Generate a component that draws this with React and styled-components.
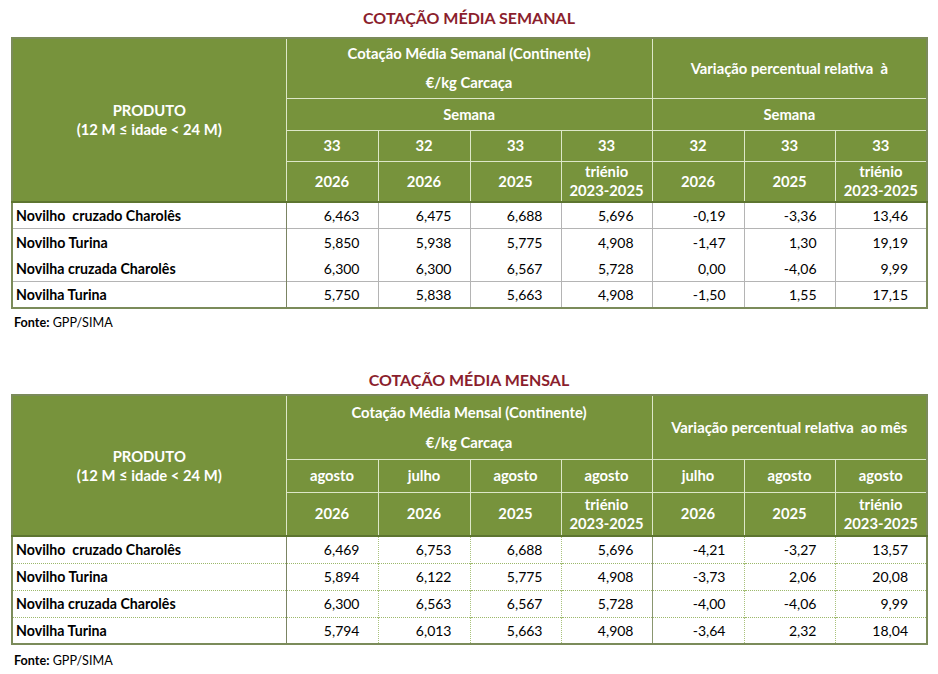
import React from "react";
import styled, { createGlobalStyle } from "styled-components";

const Global = createGlobalStyle`
  html, body { margin: 0; padding: 0; background: #fff; }
  body { font-family: Lato, "Liberation Sans", sans-serif; color: #000; }
`;

const Page = styled.div`
  width: 938px;
  display: flex;
  flex-direction: column;
`;

const Title = styled.div`
  text-align: center;
  color: #8b1e2d;
  font-weight: 700;
  font-size: 16px;
  line-height: 20px;
  margin-top: ${(p) => p.$top}px;
  margin-bottom: ${(p) => p.$bottom}px;
`;

const Table = styled.table`
  margin-left: 11px;
  width: 915px;
  border-collapse: collapse;
  table-layout: fixed;
  border: 2px solid #7b8b5a;
`;

const Col = styled.col`
  width: ${(p) => p.$w}px;
`;

const HeadRow = styled.tr`
  height: ${(p) => p.$h}px;
`;

const Th = styled.th`
  background: #77933c;
  color: #fff;
  font-weight: 700;
  font-size: 14.8px;
  line-height: ${(p) => p.$lh || 19}px;
  text-align: center;
  vertical-align: middle;
  padding: 0;
  border: 1px solid #dde7c8;
  white-space: pre;
  ${(p) => p.$last && "border-bottom: 2px solid #5d7530;"}
`;

const DataRow = styled.tr`
  height: ${(p) => p.$h}px;
`;

const NameCell = styled.td`
  font-weight: 700;
  font-size: 14.2px;
  text-align: left;
  padding: 0 0 0 3px;
  white-space: pre;
  border-right: 1px solid #7b8463;
  border-top: ${(p) =>
    p.$noTop ? "0" : p.$dotted ? "1px dotted #9cb86a" : "1px solid #b4b4b4"};
`;

const NumCell = styled.td`
  font-size: 14px;
  text-align: right;
  padding: 0 18px 0 0;
  border-top: ${(p) =>
    p.$noTop ? "0" : p.$dotted ? "1px dotted #9cb86a" : "1px solid #b4b4b4"};
  border-left: ${(p) =>
    p.$split
      ? "1px solid #8a9670"
      : p.$dotted
      ? "1px dotted #a9c27c"
      : "1px solid #b4b4b4"};
`;

const Source = styled.div`
  margin-left: 14px;
  font-size: 12.6px;
  line-height: 16px;
  margin-top: ${(p) => p.$top}px;
`;

const Bold = styled.b`
  font-weight: 700;
`;

const widths = [274, 92, 92, 91, 91, 92, 91, 92];

const Cols = () => (
  <colgroup>
    {widths.map((w, i) => (
      <Col key={i} $w={w} />
    ))}
  </colgroup>
);

const names = [
  "Novilho  cruzado Charolês",
  "Novilho Turina",
  "Novilha cruzada Charolês",
  "Novilha Turina",
];

const weekly = [
  ["6,463", "6,475", "6,688", "5,696", "-0,19", "-3,36", "13,46"],
  ["5,850", "5,938", "5,775", "4,908", "-1,47", "1,30", "19,19"],
  ["6,300", "6,300", "6,567", "5,728", "0,00", "-4,06", "9,99"],
  ["5,750", "5,838", "5,663", "4,908", "-1,50", "1,55", "17,15"],
];

const monthly = [
  ["6,469", "6,753", "6,688", "5,696", "-4,21", "-3,27", "13,57"],
  ["5,894", "6,122", "5,775", "4,908", "-3,73", "2,06", "20,08"],
  ["6,300", "6,563", "6,567", "5,728", "-4,00", "-4,06", "9,99"],
  ["5,794", "6,013", "5,663", "4,908", "-3,64", "2,32", "18,04"],
];

const yearRow = ["2026", "2026", "2025", "triénio\n2023-2025", "2026", "2025", "triénio\n2023-2025"];

const Body = ({ rows, dotted, rowH }) => (
  <tbody>
    {rows.map((r, i) => {
      const noTop = !dotted && i === 2;
      return (
        <DataRow key={i} $h={rowH}>
          <NameCell $noTop={noTop} $dotted={dotted}>
            {names[i]}
          </NameCell>
          {r.map((v, j) => (
            <NumCell key={j} $noTop={noTop} $dotted={dotted} $split={dotted && j === 4}>
              {v}
            </NumCell>
          ))}
        </DataRow>
      );
    })}
  </tbody>
);

const Produto = ({ span }) => (
  <Th rowSpan={span} $last>
    {"PRODUTO\n(12 M ≤ idade < 24 M)"}
  </Th>
);

export default function App() {
  return (
    <Page>
      <Global />
      <Title $top={8} $bottom={9}>COTAÇÃO MÉDIA SEMANAL</Title>
      <Table>
        <Cols />
        <thead>
          <HeadRow $h={60}>
            <Produto span={4} />
            <Th colSpan={4} $lh={29}>
              {"Cotação Média Semanal (Continente)\n€/kg Carcaça"}
            </Th>
            <Th colSpan={3}>{"Variação percentual relativa  à"}</Th>
          </HeadRow>
          <HeadRow $h={32}>
            <Th colSpan={4}>Semana</Th>
            <Th colSpan={3}>Semana</Th>
          </HeadRow>
          <HeadRow $h={31}>
            {["33", "32", "33", "33", "32", "33", "33"].map((t, i) => (
              <Th key={i}>{t}</Th>
            ))}
          </HeadRow>
          <HeadRow $h={41}>
            {yearRow.map((t, i) => (
              <Th key={i} $last>
                {t}
              </Th>
            ))}
          </HeadRow>
        </thead>
        <Body rows={weekly} rowH={26.5} />
      </Table>
      <Source $top={6}>
        <Bold>Fonte:</Bold> GPP/SIMA
      </Source>
      <Title $top={39} $bottom={4}>COTAÇÃO MÉDIA MENSAL</Title>
      <Table>
        <Cols />
        <thead>
          <HeadRow $h={64}>
            <Produto span={3} />
            <Th colSpan={4} $lh={30}>
              {"Cotação Média Mensal (Continente)\n€/kg Carcaça"}
            </Th>
            <Th colSpan={3}>{"Variação percentual relativa  ao mês"}</Th>
          </HeadRow>
          <HeadRow $h={33}>
            {["agosto", "julho", "agosto", "agosto", "julho", "agosto", "agosto"].map((t, i) => (
              <Th key={i}>{t}</Th>
            ))}
          </HeadRow>
          <HeadRow $h={44}>
            {yearRow.map((t, i) => (
              <Th key={i} $last>
                {t}
              </Th>
            ))}
          </HeadRow>
        </thead>
        <Body rows={monthly} dotted rowH={27} />
      </Table>
      <Source $top={8}>
        <Bold>Fonte:</Bold> GPP/SIMA
      </Source>
    </Page>
  );
}
